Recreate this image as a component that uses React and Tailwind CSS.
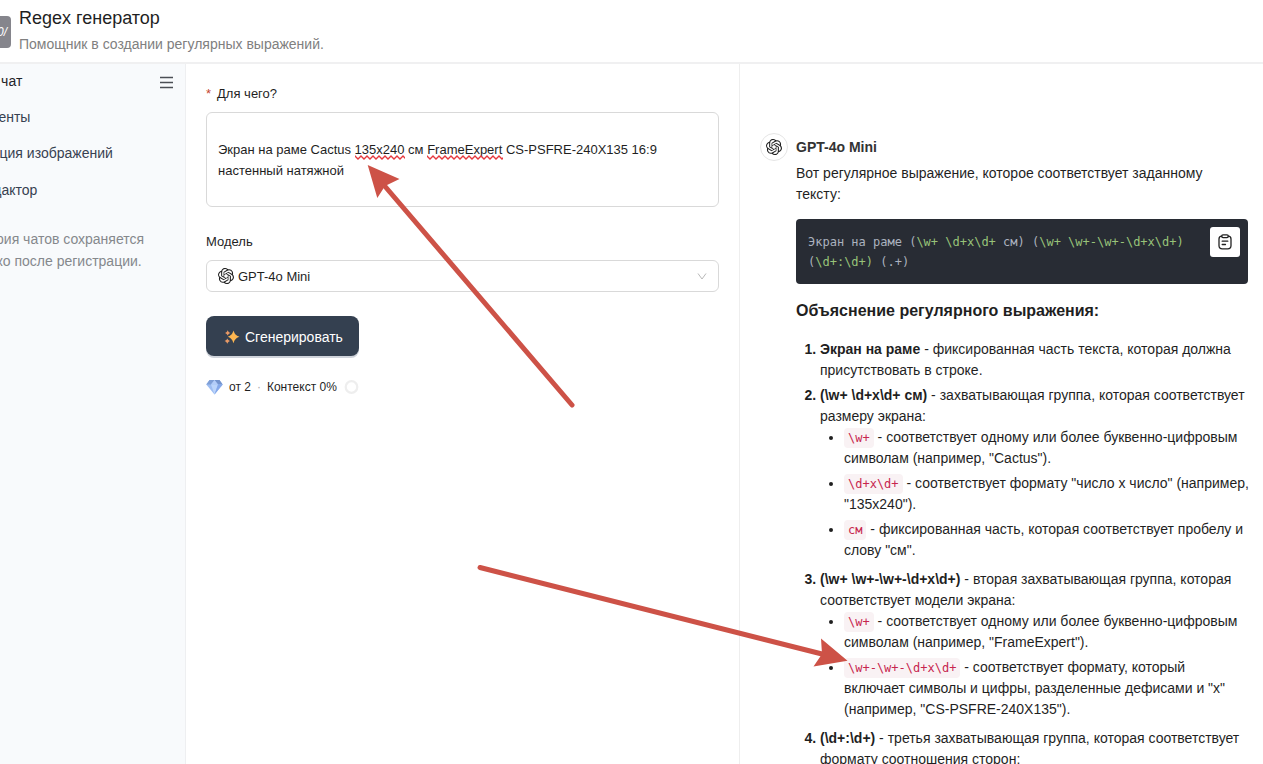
import { SiOpenai } from 'react-icons/si';

const PROMPT =
  '\nЭкран на раме Cactus 135x240 см FrameExpert CS-PSFRE-240X135 16:9 настенный натяжной\n';

function Squiggle({ className }) {
  return (
    <svg className={className} height="5" aria-hidden="true">
      <defs>
        <pattern id="wave" width="6" height="5" patternUnits="userSpaceOnUse">
          <path d="M-1 0L0 1L3 4L6 1L7 0" fill="none" stroke="#e5383d" strokeWidth="1.3" />
        </pattern>
      </defs>
      <rect width="100%" height="5" fill="url(#wave)" />
    </svg>
  );
}

function Sparkles() {
  return (
    <svg width="16" height="16" viewBox="0 0 16 16" aria-hidden="true">
      <path d="M9.5 1.5C10.7 5.2 11.7 6.300 15.5 7.8C11.7 9.300 10.7 10.500 9.5 14.3C8.300 10.500 7.300 9.300 3.7 7.8C7.300 6.300 8.300 5.2 9.5 1.5Z" fill="#fdb650" />
      <path d="M3.7 1.2C4.4 2.800 4.8 3.200 6.4 3.9C4.800 4.600 4.400 5 3.700 6.600C3 5 2.600 4.600 1 3.900C2.600 3.200 3 2.800 3.700 1.200Z" fill="#e99a66" />
      <path d="M3.300 9.400C4.100 10.900 4.500 11.300 6 12C4.500 12.700 4.100 13.200 3.300 14.700C2.600 13.200 2.100 12.700 0.600 12C2.100 11.300 2.600 10.900 3.300 9.400Z" fill="#e99a66" />
    </svg>
  );
}

function Gem() {
  return (
    <svg width="17" height="16" viewBox="0 0 17 16" aria-hidden="true">
      <path d="M3.500 1H13.500L16.700 5.500L8.500 15.500L0.300 5.500Z" fill="#9dbdf2" />
      <path d="M3.500 1H8.500L5 5.500H0.300Z" fill="#7f9fd6" />
      <path d="M13.500 1H8.500L12 5.500H16.700Z" fill="#7594cd" />
      <path d="M8.500 1L12 5.500H5Z" fill="#b4cdf8" />
      <path d="M5 5.500H12L8.500 15.500Z" fill="#bcd5fb" />
      <path d="M12 5.500H16.700L8.500 15.500Z" fill="#86a9ea" />
    </svg>
  );
}

function ClipboardIcon() {
  return (
    <svg width="16" height="16" viewBox="0 0 16 16" fill="none" stroke="#222" strokeWidth="1.300" strokeLinecap="round" aria-hidden="true">
      <path d="M4.700 2.200C2.800 2.300 2 3.200 2 5V11.500C2 13.900 3 14.900 5.300 14.900H10.700C13 14.900 14 13.900 14 11.500V5C14 3.200 13.200 2.300 11.300 2.200" />
      <rect x="4.700" y="0.900" width="6.600" height="2.700" rx="1.300" />
      <path d="M5.200 7.200H10.800M5.200 10.500H8.500" />
    </svg>
  );
}

function Code({ children }) {
  return (
    <code className="rounded bg-[#f9f2f4] px-1 py-[3px] font-['DejaVu_Sans_Mono',monospace] text-[12px] leading-none text-[#c7254e]">
      {children}
    </code>
  );
}

function Hl({ children }) {
  return <span className="text-[#98c379]">{children}</span>;
}

function Explanation({ term, text, children }) {
  return (
    <li className="pb-1">
      <strong>{term}</strong> - {text}
      {children && <ul className="list-disc pl-6">{children}</ul>}
    </li>
  );
}

function Header() {
  return (
    <header className="flex h-16 shrink-0 items-start gap-2 border-b-2 border-[#f0f0f1] pt-1">
      <div className="mt-3 flex h-8 w-[11px] items-center justify-end overflow-hidden rounded-r bg-[#85858c] pr-1 text-[12px] text-white">
        <span className="italic">0/</span>
      </div>
      <div>
        <h1 className="text-[18px] leading-7 text-[#1f1f1f]">Regex генератор</h1>
        <p className="text-[14px] leading-6 text-[#808080]">Помощник в создании регулярных выражений.</p>
      </div>
    </header>
  );
}

function Sidebar() {
  return (
    <aside className="relative overflow-hidden border-r border-[#eeeff1] bg-[#f8fafc] text-[14px]">
      <nav className="-ml-[46px] flex flex-col whitespace-nowrap text-[#374151]">
        <a href="#chat" className="h-9 leading-[34px] text-[#1f2329]">Новый чат</a>
        <a href="#assistants" className="h-9 leading-[34px]">Ассистенты</a>
        <a href="#images" className="h-9 leading-[34px]">Генерация изображений</a>
        <a href="#editor" className="h-9 leading-9">ИИ редактор</a>
      </nav>
      <p className="-ml-9 mr-10 mt-5 whitespace-nowrap text-center leading-[22px] text-[#85888c]">
        История чатов сохраняется
        <br />
        только после регистрации.
      </p>
      <button type="button" aria-label="Меню" className="absolute right-[11px] top-[11px] p-px">
        <svg width="13" height="13" viewBox="0 0 13 13" stroke="#4b4f55" strokeWidth="1.500" aria-hidden="true">
          <path d="M0 1.500H13M0 6.500H13M0 11.500H13" />
        </svg>
      </button>
    </aside>
  );
}

function PromptForm() {
  return (
    <form className="border-r border-[#eeeeee] px-5 pt-[19px] text-[13px] text-[#1f1f1f]" onSubmit={(e) => e.preventDefault()}>
      <label htmlFor="purpose" className="mb-[7px] flex gap-1.5 leading-[22px]">
        <span className="text-[#c4462f]">*</span>Для чего?
      </label>
      <div className="relative">
        <textarea
          id="purpose"
          spellCheck="false"
          defaultValue={PROMPT}
          className="block h-[95px] w-full resize-none overflow-hidden rounded-md border border-[#d9d9d9] px-[11px] py-[5px] leading-[21px] outline-none"
        />
        <Squiggle className="absolute left-[149px] top-[43px] w-[50px]" />
        <Squiggle className="absolute left-[221px] top-[43px] w-[76px]" />
      </div>
      <label htmlFor="model" className="mb-[7px] mt-6 block leading-[22px]">Модель</label>
      <div className="relative">
        <SiOpenai className="pointer-events-none absolute left-3 top-2 size-4" aria-hidden="true" />
        <select id="model" className="h-8 w-full appearance-none rounded-md border border-[#d9d9d9] bg-transparent pl-[31px] pt-0.5 text-[13px] outline-none">
          <option>GPT-4o Mini</option>
        </select>
        <svg className="pointer-events-none absolute right-3 top-3" width="10" height="9" viewBox="0 0 10 9" fill="none" stroke="#b9b9b9" aria-hidden="true">
          <path d="M1 1.500L5 7L9 1.500" />
        </svg>
      </div>
      <button type="submit" className="mt-6 flex h-10 items-center gap-[3px] rounded-lg bg-[#344050] px-4 pt-0.5 text-[14px] text-white shadow-[0_2px_0_#cfd3da]">
        <span className="px-0.5"><Sparkles /></span>
        Сгенерировать
      </button>
      <div className="mt-5 flex items-center gap-1.5 text-[12px] leading-[22px]">
        <Gem />
        <span>от 2</span>
        <span className="text-[#aaaaaa]">·</span>
        <span>Контекст 0%</span>
        <svg width="16" height="14" viewBox="0 0 16 14" aria-hidden="true">
          <circle cx="8.500" cy="7" r="5.800" fill="none" stroke="#eeeeee" strokeWidth="2.200" />
        </svg>
      </div>
    </form>
  );
}

function Answer() {
  return (
    <article className="flex min-w-0 gap-2 overflow-hidden pl-5 pr-3 pt-[69px] text-[14px] leading-[21px] text-[#1f1f1f]">
      <div className="flex size-7 shrink-0 items-center justify-center rounded-full border border-[#e5e5e5]">
        <SiOpenai className="size-4" aria-hidden="true" />
      </div>
      <div className="min-w-0 grow">
        <h2 className="font-bold leading-7 text-[#333333]">GPT-4o Mini</h2>
        <p className="mt-0.5">Вот регулярное выражение, которое соответствует заданному тексту:</p>
        <div className="relative mr-[3px] mt-[14px] rounded bg-[#282c34] px-3 pb-3 pt-[13px]">
          <pre className="whitespace-pre-wrap pr-10 font-['DejaVu_Sans_Mono',monospace] text-[12px] leading-5 text-[#abb2bf]">
            {'Экран на раме ('}<Hl>{'\\w+ \\d+x\\d+'}</Hl>{' см) ('}<Hl>{'\\w+ \\w+-\\w+-\\d+x\\d+)'}</Hl>{' ('}<Hl>{'\\d+:\\d+)'}</Hl>{' (.+)'}
          </pre>
          <button type="button" aria-label="Копировать" className="absolute right-2 top-2 flex size-[30px] items-center justify-center rounded-[3px] bg-white">
            <ClipboardIcon />
          </button>
        </div>
        <h3 className="mt-[14px] text-[16px] font-bold leading-[25px]">Объяснение регулярного выражения:</h3>
        <ol className="mt-4 list-decimal pl-6 marker:font-bold">
          <Explanation term="Экран на раме" text="фиксированная часть текста, которая должна присутствовать в строке." />
          <Explanation term="(\w+ \d+x\d+ см)" text="захватывающая группа, которая соответствует размеру экрана:">
            <li className="pb-1"><Code>{'\\w+'}</Code> - соответствует одному или более буквенно-цифровым символам (например, "Cactus").</li>
            <li className="pb-1"><Code>{'\\d+x\\d+'}</Code> - соответствует формату "число x число" (например, "135x240").</li>
            <li className="pb-1"><Code>см</Code> - фиксированная часть, которая соответствует пробелу и слову "см".</li>
          </Explanation>
          <Explanation term="(\w+ \w+-\w+-\d+x\d+)" text="вторая захватывающая группа, которая соответствует модели экрана:">
            <li className="pb-1"><Code>{'\\w+'}</Code> - соответствует одному или более буквенно-цифровым символам (например, "FrameExpert").</li>
            <li className="pb-1 pr-4"><Code>{'\\w+-\\w+-\\d+x\\d+'}</Code> - соответствует формату, который включает символы и цифры, разделенные дефисами и "x" (например, "CS-PSFRE-240X135").</li>
          </Explanation>
          <Explanation term="(\d+:\d+)" text="третья захватывающая группа, которая соответствует формату соотношения сторон:" />
        </ol>
      </div>
    </article>
  );
}

function Arrows() {
  return (
    <svg className="pointer-events-none absolute left-0 top-0" width="1263" height="764" viewBox="0 0 1263 764" fill="#cd5247" stroke="#cd5247" aria-hidden="true">
      <path d="M572 405L383 184M480 567.500L824 654.500" strokeWidth="5" strokeLinecap="round" />
      <path d="M367.700 165L399.500 179L385 186L377.300 198Z" stroke="none" />
      <path d="M847.500 660.700L821 638.500L822 654L813.500 666.500Z" stroke="none" />
    </svg>
  );
}

export default function App() {
  return (
    <div className="relative flex h-screen flex-col overflow-hidden bg-white font-['Liberation_Sans',Arial,sans-serif]">
      <Header />
      <main className="grid min-h-0 grow grid-cols-[186px_554fr_523fr]">
        <Sidebar />
        <PromptForm />
        <Answer />
      </main>
      <Arrows />
    </div>
  );
}
